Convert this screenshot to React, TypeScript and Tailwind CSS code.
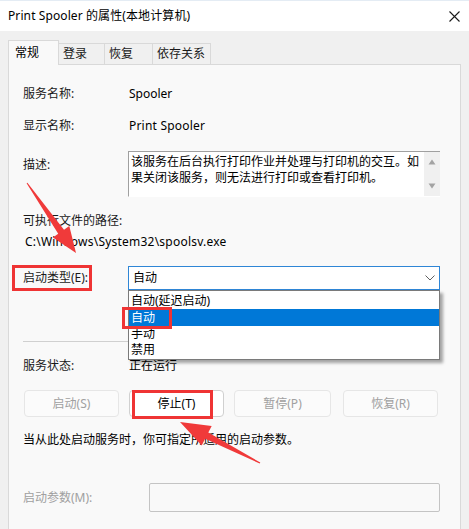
import { ReactNode } from "react";

const FONT = { fontFamily: '"Noto Sans", "Noto Sans CJK SC", sans-serif' };

const Tab = ({ label, width, active }: { label: string; width: number; active?: boolean }) => {
  if (active) {
    return (
      <div
        className="relative z-10 -mb-px h-[25px] bg-[#f9f9f9] border-l border-t border-r border-[#d9d9d9] flex items-center pl-[6px] text-[12px] text-black"
        style={{ width }}
      >
        {label}
      </div>
    );
  }
  return (
    <div
      className="h-[21px] bg-[#f0f0f0] border-t border-r border-[#d9d9d9] flex items-center pl-[4px] text-[12px] text-[#1a1a1a]"
      style={{ width }}
    >
      {label}
    </div>
  );
};

const InfoRow = ({ label, children, className = "" }: { label: string; children?: ReactNode; className?: string }) => (
  <div className={"flex h-4 items-center leading-4 text-[12px] " + className}>
    <div className="w-[106px] shrink-0 text-[#1a1a1a]">{label}</div>
    <div className="text-black">{children}</div>
  </div>
);

const RedBox = ({ className }: { className: string }) => (
  <div className={"absolute border-[3px] border-[#ef3434] pointer-events-none " + className} />
);

const SvcButton = ({ label, width, enabled }: { label: string; width: number; enabled?: boolean }) => (
  <div
    className={
      "h-[27px] rounded-[4px] border flex items-center justify-center text-[12px] " +
      (enabled
        ? "bg-white border-[#d0d0d0] text-black"
        : "bg-[#fbfbfb] border-[#e6e6e6] text-[#a0a0a0]")
    }
    style={{ width }}
  >
    {label}
  </div>
);

export default function App() {
  return (
    <div className="relative w-[469px] h-[529px] overflow-hidden bg-[#f0f0f0]" style={FONT}>
      {/* title bar */}
      <div className="h-[31px] bg-white flex items-center justify-between pl-2 pr-[9px] border-t border-[#e4ecf4]">
        <span className="text-[12px] text-black leading-4 tracking-[0.1px]">Print Spooler 的属性(本地计算机)</span>
        <svg width="11" height="11" viewBox="0 0 11 11">
          <path d="M0.5 0.5 L10.5 10.5 M10.5 0.5 L0.5 10.5" stroke="#1a1a1a" strokeWidth="1.1" />
        </svg>
      </div>

      <div className="px-2 pt-[9px]">
        {/* tabs */}
        <div className="flex items-end h-6">
          <Tab label="常规" width={51} active />
          <Tab label="登录" width={46} />
          <Tab label="恢复" width={48} />
          <Tab label="依存关系" width={58} />
        </div>

        {/* panel */}
        <div className="h-[470px] w-[453px] bg-[#f9f9f9] border border-[#d9d9d9] pl-[14px] pr-5 flex flex-col">
          <InfoRow label="服务名称:" className="mt-[21px]">Spooler</InfoRow>
          <InfoRow label="显示名称:" className="mt-4">
            <span className="tracking-[0.2px]">Print Spooler</span>
          </InfoRow>

          <div className="flex mt-[17px] text-[12px]">
            <div className="w-[105px] shrink-0 pt-[6px] leading-4 text-[#1a1a1a]">描述:</div>
            <div className="flex w-[312px] h-[46px] bg-white border-t border-l border-[#a0a0a0] border-b border-b-white">
              <div className="flex-1 pl-[2px] pt-[2px] leading-4 text-black">
                该服务在后台执行打印作业并处理与打印机的交互。如果关闭该服务，则无法进行打印或查看打印机。
              </div>
              <div className="w-[16px] bg-[#f0f0f0] flex flex-col items-center justify-between py-[7px]">
                <svg width="8" height="6" viewBox="0 0 8 6">
                  <path d="M4 0.5 L7.5 5.5 L0.5 5.5 Z" fill="#a3a3a3" />
                </svg>
                <svg width="8" height="6" viewBox="0 0 8 6">
                  <path d="M0.5 0.5 L7.5 0.5 L4 5.5 Z" fill="#a3a3a3" />
                </svg>
              </div>
            </div>
          </div>

          <div className="mt-4 h-4 leading-4 text-[12px] text-[#1a1a1a]">可执行文件的路径:</div>
          <div className="mt-[5px] h-4 leading-4 text-[12px] text-black pl-[2px] tracking-[0.22px]">
            C:\Windows\System32\spoolsv.exe
          </div>

          <div className="flex items-center mt-4 text-[12px]">
            <div className="relative w-[105px] shrink-0 leading-4 text-[#1a1a1a]">
              启动类型(E):
              <RedBox className="left-[-11px] top-[-5px] w-[80px] h-[26px]" />
            </div>
            <div className="relative w-[312px] h-6 bg-white border border-[#2f86d6] flex items-center justify-between pl-[4px] pr-[4px] text-black">
              <span className="leading-4">自动</span>
              <svg width="10" height="6" viewBox="0 0 10 6">
                <path d="M0.5 0.5 L5 5 L9.5 0.5" fill="none" stroke="#606060" strokeWidth="1" />
              </svg>
              {/* open list */}
              <div className="absolute left-[-1px] top-[23px] w-[312px] h-[70px] z-20 bg-white border border-[#7a7a7a] shadow-[3px_3px_3px_rgba(0,0,0,0.35)] pt-[2px] leading-4">
                <div className="h-4 pl-[2px]">自动(延迟启动)</div>
                <div className="h-[17px] pl-[2px] bg-[#0078d7] text-white flex items-center">自动</div>
                <div className="h-4 pl-[2px]">手动</div>
                <div className="h-4 pl-[2px]">禁用</div>
                <RedBox className="left-[-7px] top-[16px] w-[50px] h-[22px]" />
              </div>
            </div>
          </div>

          <div className="mt-[51px] h-px bg-[#d0d0d0]" />

          <InfoRow label="服务状态:" className="mt-4">正在运行</InfoRow>

          <div className="flex mt-4 ml-px">
            <SvcButton label="启动(S)" width={95} />
            <div className="relative ml-[10px]">
              <SvcButton label="停止(T)" width={95} enabled />
              <RedBox className="left-[3px] top-0 w-[81px] h-[29px]" />
            </div>
            <div className="ml-[10px]">
              <SvcButton label="暂停(P)" width={97} />
            </div>
            <div className="ml-3">
              <SvcButton label="恢复(R)" width={95} />
            </div>
          </div>

          <div className="mt-[15px] h-4 leading-4 text-[12px] text-black">
            当从此处启动服务时，你可指定所适用的启动参数。
          </div>

          <div className="flex items-center mt-[35px] text-[12px]">
            <div className="w-[126px] shrink-0 leading-4 text-[#a0a0a0]">启动参数(M):</div>
            <div className="w-[291px] h-[29px] bg-[#f9f9f9] border border-[#c4c4c4] rounded-[2px]" />
          </div>
        </div>
      </div>

      {/* red annotation arrows */}
      <svg className="absolute inset-0 z-30 pointer-events-none" width="469" height="529" viewBox="0 0 469 529">
        <polygon
          points="26.6,183.3 58.2,233.7 52.9,237.4 76,253 69.3,226 64,229.7 27.4,182.7"
          fill="#f03a3a"
        />
        <polygon
          points="260.3,462.5 208.3,432.6 211.7,425.9 180,422 201.7,445.5 205.1,438.8 259.7,463.5"
          fill="#f03a3a"
        />
      </svg>
    </div>
  );
}
